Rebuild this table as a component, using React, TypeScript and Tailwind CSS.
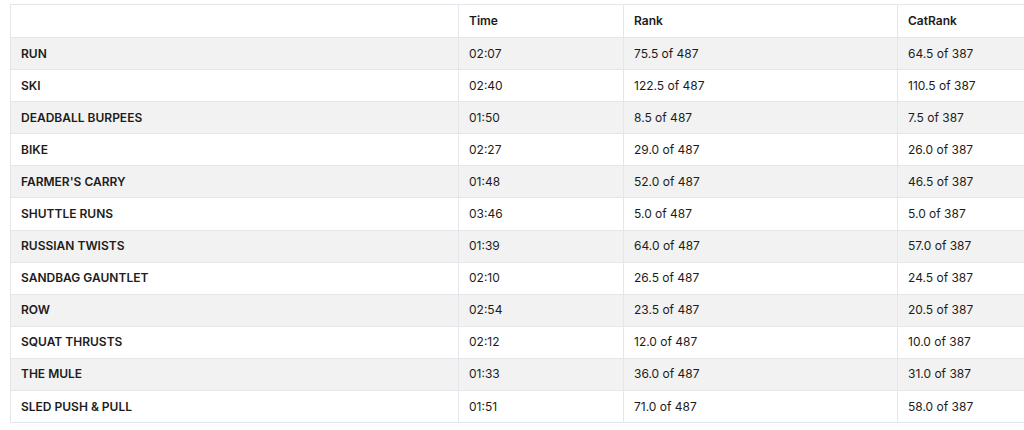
const rows: [string, string, string, string][] = [
  ['RUN', '02:07', '75.5 of 487', '64.5 of 387'],
  ['SKI', '02:40', '122.5 of 487', '110.5 of 387'],
  ['DEADBALL BURPEES', '01:50', '8.5 of 487', '7.5 of 387'],
  ['BIKE', '02:27', '29.0 of 487', '26.0 of 387'],
  ["FARMER'S CARRY", '01:48', '52.0 of 487', '46.5 of 387'],
  ['SHUTTLE RUNS', '03:46', '5.0 of 487', '5.0 of 387'],
  ['RUSSIAN TWISTS', '01:39', '64.0 of 487', '57.0 of 387'],
  ['SANDBAG GAUNTLET', '02:10', '26.5 of 487', '24.5 of 387'],
  ['ROW', '02:54', '23.5 of 487', '20.5 of 387'],
  ['SQUAT THRUSTS', '02:12', '12.0 of 487', '10.0 of 387'],
  ['THE MULE', '01:33', '36.0 of 487', '31.0 of 387'],
  ['SLED PUSH & PULL', '01:51', '71.0 of 487', '58.0 of 387'],
];

export default function App() {
  return (
    <div className="h-[430px] w-[1024px] overflow-hidden bg-white pl-[10px] pt-[4px] font-['Inter',sans-serif] text-[12px] text-[#1c1c1c]">
      <table className="w-[1100px] table-fixed border-collapse border border-[#e4e6eb]">
        <colgroup>
          <col className="w-[448px]" />
          <col className="w-[165px]" />
          <col className="w-[274px]" />
          <col />
        </colgroup>
        <thead>
          <tr className="h-[33px]">
            <th className="border border-[#e4e6eb] px-[10px] pb-[1px]" />
            <th className="border border-[#e4e6eb] px-[10px] pb-[1px] text-left font-semibold">Time</th>
            <th className="border border-[#e4e6eb] px-[10px] pb-[1px] text-left font-semibold">Rank</th>
            <th className="border border-[#e4e6eb] px-[10px] pb-[1px] text-left font-semibold">CatRank</th>
          </tr>
        </thead>
        <tbody>
          {rows.map(([name, time, rank, cat], i) => (
            <tr key={name} className={i % 2 === 0 ? 'h-[32.1px] bg-[#f2f2f2]' : 'h-[32.1px] bg-white'}>
              <td className="border border-[#e4e6eb] px-[10px] font-semibold">{name}</td>
              <td className="border border-[#e4e6eb] px-[10px]">{time}</td>
              <td className="border border-[#e4e6eb] px-[10px]">{rank}</td>
              <td className="border border-[#e4e6eb] px-[10px]">{cat}</td>
            </tr>
          ))}
        </tbody>
      </table>
    </div>
  );
}
